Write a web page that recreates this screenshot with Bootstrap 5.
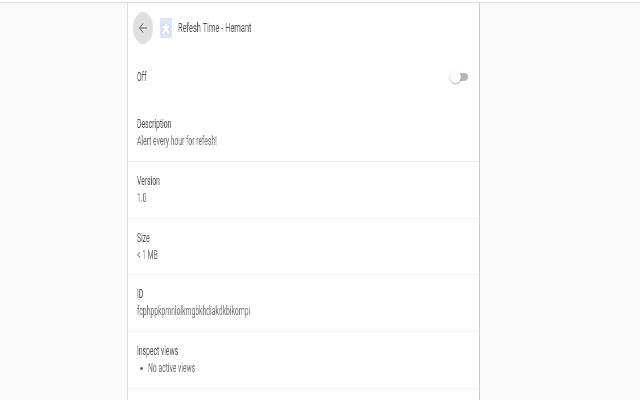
<!DOCTYPE html>
<html lang="en"><head><meta charset="utf-8"><title>Extension</title>
<link rel="stylesheet" href="https://cdn.jsdelivr.net/npm/bootstrap@5.3.0/dist/css/bootstrap.min.css">
<style>
html,body{height:400px;overflow:hidden}
body{background:#f8f9fa;font-family:Roboto,sans-serif;color:#6b6e72}
.topline{height:3px;background:#fff;border-bottom:1px solid #e4e4e4}
.sheet{width:353px;margin-left:127px;background:#fff;border-left:1px solid #dadce0;border-right:1px solid #c8cacd;height:397px;overflow:hidden}
.txt{display:block;font-size:12px;line-height:18px;transform:scaleX(.565);transform-origin:left center;white-space:nowrap;will-change:transform}
.lbl{color:#4a4d51}
.ttl{transform:scaleX(.62)}
.head{height:50px;padding-left:5px}
.backbtn{width:20px;height:32px;border-radius:50%;background:#dfe0e2}
.extic{width:12px;height:20px;margin-left:7px;margin-right:6px;background:#dce6f5}
.rowoff{height:52px;padding:0 11px 4px 9px}
.togg{position:relative;width:14px;height:8px;border-radius:4px;background:#b5b7ba}
.knob{position:absolute;left:-4px;top:-2px;width:11px;height:12px;border-radius:50%;background:#fff;box-shadow:0 1px 2px rgba(0,0,0,.35)}
.inforow{height:56.75px;padding:9px 9px 0;border-bottom:1px solid #eef0f1}
.inforow .lbl{position:relative;top:1px}
.bul{flex:none;width:3px;height:3px;border-radius:50%;background:#5f6368;margin:0 5px 0 3px}
</style></head><body>
<div class="topline"></div>
<div class="sheet">
 <div class="head d-flex align-items-center">
  <div class="backbtn d-flex align-items-center justify-content-center">
   <svg width="10" height="14" viewBox="0 0 10 14"><path d="M9 7H1.5M5 2.5 1.5 7 5 11.5" fill="none" stroke="#63666a" stroke-width="1"/></svg>
  </div>
  <div class="extic d-flex align-items-center justify-content-center">
   <svg width="10" height="14" viewBox="0 0 10 14"><path d="M1 4.5h2.6V3.2a1.3 1.5 0 0 1 2.6 0v1.3H8.5v2.7h-.3a1.2 1.4 0 0 0 0 2.8h.3V13H6V12a1.2 1.2 0 0 0-2.4 0v1H1V10.200h.6a1.200 1.300 0 0 0 0-2.600H1z" fill="#fff" stroke="#bfcadb" stroke-width=".5"/></svg>
  </div>
  <span class="txt lbl ttl">Refesh Time - Hemant</span>
 </div>
 <div class="rowoff d-flex align-items-center justify-content-between">
  <span class="txt lbl">Off</span>
  <div class="togg"><div class="knob"></div></div>
 </div>
 <div class="inforow"><div class="txt lbl">Description</div><div class="txt">Alert every hour for refesh!</div></div>
 <div class="inforow"><div class="txt lbl">Version</div><div class="txt">1.0</div></div>
 <div class="inforow"><div class="txt lbl">Size</div><div class="txt">&lt; 1 MB</div></div>
 <div class="inforow"><div class="txt lbl">ID</div><div class="txt">fcphppkpmnlolkmgbkhdiakdkbikompi</div></div>
 <div class="inforow"><div class="txt lbl">Inspect views</div>
  <div class="d-flex align-items-center"><span class="bul"></span><span class="txt">No active views</span></div></div>
</div>
</body></html>
